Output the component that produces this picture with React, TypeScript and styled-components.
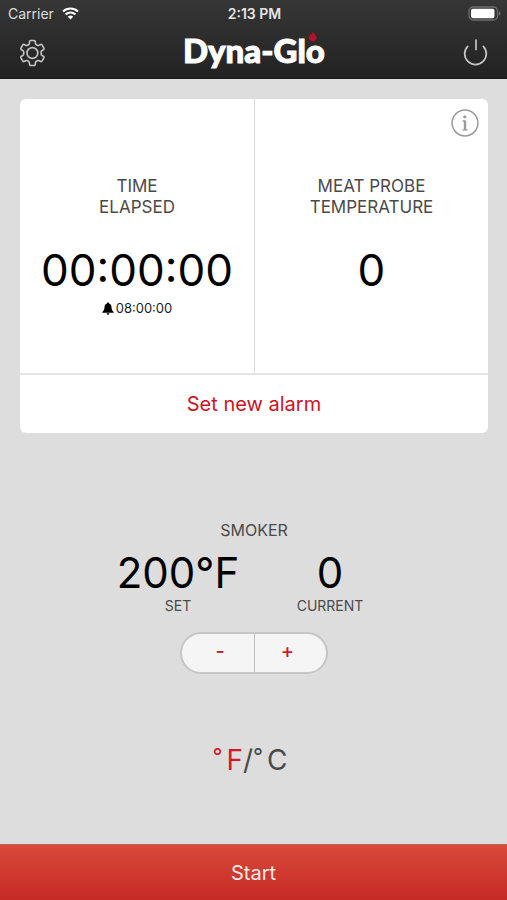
import React, { useState } from "react";
import styled, { createGlobalStyle } from "styled-components";

const GlobalStyle = createGlobalStyle`
  *, *::before, *::after { box-sizing: border-box; }
  body {
    margin: 0;
    background: #dddddd;
    font-family: Inter, "Liberation Sans", sans-serif;
    color: #4a4a4a;
  }
  button {
    margin: 0;
    padding: 0;
    border: 0;
    background: none;
    font: inherit;
    color: inherit;
    cursor: pointer;
  }
  h1, h2, p { margin: 0; font-weight: 400; }
  svg { display: block; }
`;

const Screen = styled.div`
  min-height: 100vh;
  display: flex;
  flex-direction: column;
`;

const Header = styled.header`
  background: linear-gradient(#363636, #222222);
  border-bottom: 1px solid #1a1a1a;
  color: #ffffff;
`;

const StatusBar = styled.div`
  display: grid;
  grid-template-columns: 1fr auto 1fr;
  align-items: center;
  height: 27px;
  padding: 0 6px 0 8px;
  font-size: 14px;
`;

const Carrier = styled.div`
  display: flex;
  align-items: center;
  gap: 8px;
  color: #dedede;
`;

const Clock = styled.time`
  font-weight: 600;
  color: #e4e4e4;
`;

const Battery = styled.div`
  justify-self: end;
`;

const NavBar = styled.div`
  display: flex;
  align-items: center;
  justify-content: space-between;
  height: 51px;
  padding: 0 18px;
`;

const IconButton = styled.button`
  display: grid;
  place-items: center;
  width: 28px;
  height: 28px;
  color: #c4c4c4;
`;

const Main = styled.main`
  flex: 1;
  display: flex;
  flex-direction: column;
  align-items: center;
  padding: 20px 19px 0 20px;
`;

const Card = styled.section`
  width: 100%;
  background: #ffffff;
  border-radius: 6px;
  overflow: hidden;
`;

const Readings = styled.div`
  display: grid;
  grid-template-columns: 1fr 1fr;
  border-bottom: 2px solid #e4e4e4;
`;

const Reading = styled.div`
  position: relative;
  display: flex;
  flex-direction: column;
  align-items: center;
  height: 274px;
  padding-top: 77px;
  text-align: center;

  & + & { border-left: 1px solid #dcdcdc; }
`;

const ReadingLabel = styled.h2`
  font-size: 17px;
  line-height: 21px;
`;

const Value = styled.p`
  font-size: 44px;
  line-height: 48px;
  color: #000000;
`;

const ReadingValue = styled(Value)`
  margin-top: 28px;
`;

const AlarmTime = styled.p`
  display: flex;
  align-items: center;
  gap: 2px;
  margin-top: 6px;
  font-size: 13px;
  line-height: 16px;
  color: #222222;
`;

const InfoButton = styled(IconButton)`
  position: absolute;
  top: 10px;
  right: 9px;
  color: #9b9b9b;
`;

const AlarmButton = styled.button`
  width: 100%;
  height: 58px;
  padding-bottom: 1px;
  font-size: 20px;
  color: #c8141f;
`;

const Smoker = styled.section`
  display: flex;
  flex-direction: column;
  align-items: center;
  margin-top: 87px;
`;

const SmokerTitle = styled.h2`
  font-size: 16px;
  line-height: 20px;
`;

const Temperatures = styled.div`
  display: grid;
  grid-template-columns: 152px 152px;
  margin-top: 9px;
  text-align: center;
`;

const Temperature = styled(Value)`
  font-size: 42px;
`;

const Caption = styled.p`
  font-size: 14px;
  line-height: 18px;
`;

const Stepper = styled.div`
  display: grid;
  grid-template-columns: 1fr 1fr;
  width: 148px;
  height: 42px;
  margin-top: 17px;
  border: 2px solid #c6c6c6;
  border-radius: 21px;
  background: #f5f5f5;
  overflow: hidden;
`;

const StepButton = styled.button`
  padding: 0 0 4px 4px;
  font-size: 20px;
  font-weight: 500;
  color: #c8202c;

  & + & {
    padding: 0 6px 4px 0;
    border-left: 1px solid #bdbdbd;
  }
`;

const Units = styled.div`
  display: flex;
  align-items: center;
  margin-top: 68px;
  padding-right: 8px;
  font-size: 28px;
  line-height: 36px;
`;

const UnitButton = styled.button<{ $active: boolean }>`
  display: flex;
  gap: 4px;
  color: ${(p) => (p.$active ? "#d8142b" : "#4a4a4a")};
`;

const Degree = styled.span`
  font-size: 22px;
  line-height: 28px;
`;

const StartButton = styled.button`
  height: 56px;
  border-top: 1px solid #c0604f;
  background: linear-gradient(#d84a3a, #c62a25);
  font-size: 20px;
  color: #fbe9e6;
`;

const WifiIcon = () => (
  <svg width="17" height="13" viewBox="0 0 17 13" fill="none" stroke="#fff" strokeWidth="2.1" aria-hidden="true">
    <path d="M1 4.6a10.8 10.8 0 0 1 15 0" />
    <path d="M3.6 7.5a7 7 0 0 1 9.8 0" />
    <path d="M5.8 9.7a3.9 3.9 0 0 1 5.4 0L8.5 12.5Z" fill="#fff" stroke="none" />
  </svg>
);

const BatteryIcon = () => (
  <svg width="33" height="15" viewBox="0 0 33 15" role="img" aria-label="Battery full">
    <rect x="1" y="1" width="28.5" height="13" rx="4" fill="none" stroke="#6e6e6e" strokeWidth="1.3" />
    <rect x="3" y="2.8" width="23.5" height="9.4" rx="2" fill="#fff" />
    <path d="M31 5.3c1.8.6 1.8 3.8 0 4.4Z" fill="#777" />
  </svg>
);

const GearIcon = () => (
  <svg width="28" height="28" viewBox="0 0 28 28" fill="none" stroke="currentColor" strokeWidth="1.6" strokeLinejoin="round" aria-hidden="true">
    <path d="M12.600 1.500h3.600q.9 0 1 .9l.3 2.300q.1.700.8 1l1 .6q.6.400 1.300.1l2.100-.9q.8-.3 1.300.4l1.900 3.300q.4.800-.3 1.300l-1.900 1.400q-.6.500-.6 1.200v1.800q0 .7.600 1.200l1.900 1.400q.7.500.3 1.300l-1.900 3.300q-.5.700-1.300.4l-2.100-.9q-.7-.3-1.300.1l-1 .6q-.7.300-.8 1l-.3 2.300q-.1.900-1 .9h-3.600q-.9 0-1-.9l-.3-2.300q-.1-.7-.8-1l-1-.6q-.6-.4-1.300-.1l-2.100.9q-.8.3-1.300-.4l-1.900-3.300q-.4-.8.3-1.300l1.900-1.400q.6-.5.6-1.200v-1.800q0-.7-.6-1.200l-1.900-1.400q-.7-.5-.3-1.300l1.900-3.300q.5-.7 1.300-.4l2.100.9q.7.3 1.300-.1l1-.6q.7-.3.800-1l.3-2.300q.1-.9 1-.9Z" />
    <circle cx="14.400" cy="14" r="5.400" />
  </svg>
);

const PowerIcon = () => (
  <svg width="26" height="28" viewBox="0 0 26 28" fill="none" stroke="currentColor" strokeWidth="1.7" strokeLinecap="round" aria-hidden="true">
    <path d="M14 1v9.500" />
    <path d="M5.700 7.300a10.800 10.800 0 1 0 15.600 0" />
  </svg>
);

const InfoIcon = () => (
  <svg width="28" height="28" viewBox="0 0 28 28" fill="none" stroke="currentColor" aria-hidden="true">
    <circle cx="14" cy="14" r="12.900" strokeWidth="1.500" />
    <circle cx="13.800" cy="7.800" r="1.600" fill="currentColor" stroke="none" />
    <path d="M11.600 12h2.400M11.400 20.800h5.200" strokeWidth="1.300" />
    <path d="M14 11.400v9.800" strokeWidth="2.400" />
  </svg>
);

const BellIcon = () => (
  <svg width="12" height="13" viewBox="0 0 12 13" fill="#000" aria-hidden="true">
    <path d="M6 .5c.7 0 1 .4 1 1C8.800 2 9.400 3.400 9.500 5.200c.1 2.200.7 3.300 2.200 4.700v.8H.3v-.8c1.500-1.400 2.100-2.500 2.200-4.700C2.600 3.400 3.200 2 5 1.500c0-.6.3-1 1-1Z" />
    <path d="M4.600 11.200h2.800c0 2-2.800 2-2.800 0Z" />
  </svg>
);

const Logo = () => (
  <svg width="146" height="44" viewBox="0 0 146 44" role="img" aria-label="Dyna-Glo">
    <text
      x="73"
      y="32"
      textAnchor="middle"
      fill="#fff"
      stroke="#fff"
      strokeWidth="1"
      fontFamily="Lato, sans-serif"
      fontWeight="900"
      fontSize="33"
    >
      Dyna-Glo
    </text>
    <path d="M131.500 0c.5 2.200 4 3.800 4 6.800 0 2.200-1.600 3.400-3.700 3.400s-3.800-1.200-3.800-3.400c0-1.700.8-2.700 1.600-3.900l.7 1.300c.7-.9 1.200-2.400 1.200-4.200Z" fill="#b3142a" />
  </svg>
);

export default function App() {
  const [unit, setUnit] = useState<"F" | "C">("F");
  const [target, setTarget] = useState(200);

  return (
    <>
      <GlobalStyle />
      <Screen>
        <Header>
          <StatusBar>
            <Carrier>
              Carrier
              <WifiIcon />
            </Carrier>
            <Clock>2:13 PM</Clock>
            <Battery>
              <BatteryIcon />
            </Battery>
          </StatusBar>
          <NavBar>
            <IconButton aria-label="Settings">
              <GearIcon />
            </IconButton>
            <h1>
              <Logo />
            </h1>
            <IconButton aria-label="Power">
              <PowerIcon />
            </IconButton>
          </NavBar>
        </Header>
        <Main>
          <Card>
            <Readings>
              <Reading>
                <ReadingLabel>
                  TIME
                  <br />
                  ELAPSED
                </ReadingLabel>
                <ReadingValue>00:00:00</ReadingValue>
                <AlarmTime>
                  <BellIcon />
                  08:00:00
                </AlarmTime>
              </Reading>
              <Reading>
                <InfoButton aria-label="Probe information">
                  <InfoIcon />
                </InfoButton>
                <ReadingLabel>
                  MEAT PROBE
                  <br />
                  TEMPERATURE
                </ReadingLabel>
                <ReadingValue>0</ReadingValue>
              </Reading>
            </Readings>
            <AlarmButton>Set new alarm</AlarmButton>
          </Card>
          <Smoker>
            <SmokerTitle>SMOKER</SmokerTitle>
            <Temperatures>
              <div>
                <Temperature>{target}°{unit}</Temperature>
                <Caption>SET</Caption>
              </div>
              <div>
                <Temperature>0</Temperature>
                <Caption>CURRENT</Caption>
              </div>
            </Temperatures>
            <Stepper>
              <StepButton aria-label="Decrease temperature" onClick={() => setTarget(target - 5)}>
                -
              </StepButton>
              <StepButton aria-label="Increase temperature" onClick={() => setTarget(target + 5)}>
                +
              </StepButton>
            </Stepper>
          </Smoker>
          <Units>
            <UnitButton $active={unit === "F"} aria-pressed={unit === "F"} onClick={() => setUnit("F")}>
              <Degree>°</Degree>F
            </UnitButton>
            /
            <UnitButton $active={unit === "C"} aria-pressed={unit === "C"} onClick={() => setUnit("C")}>
              <Degree>°</Degree>C
            </UnitButton>
          </Units>
        </Main>
        <StartButton>Start</StartButton>
      </Screen>
    </>
  );
}
